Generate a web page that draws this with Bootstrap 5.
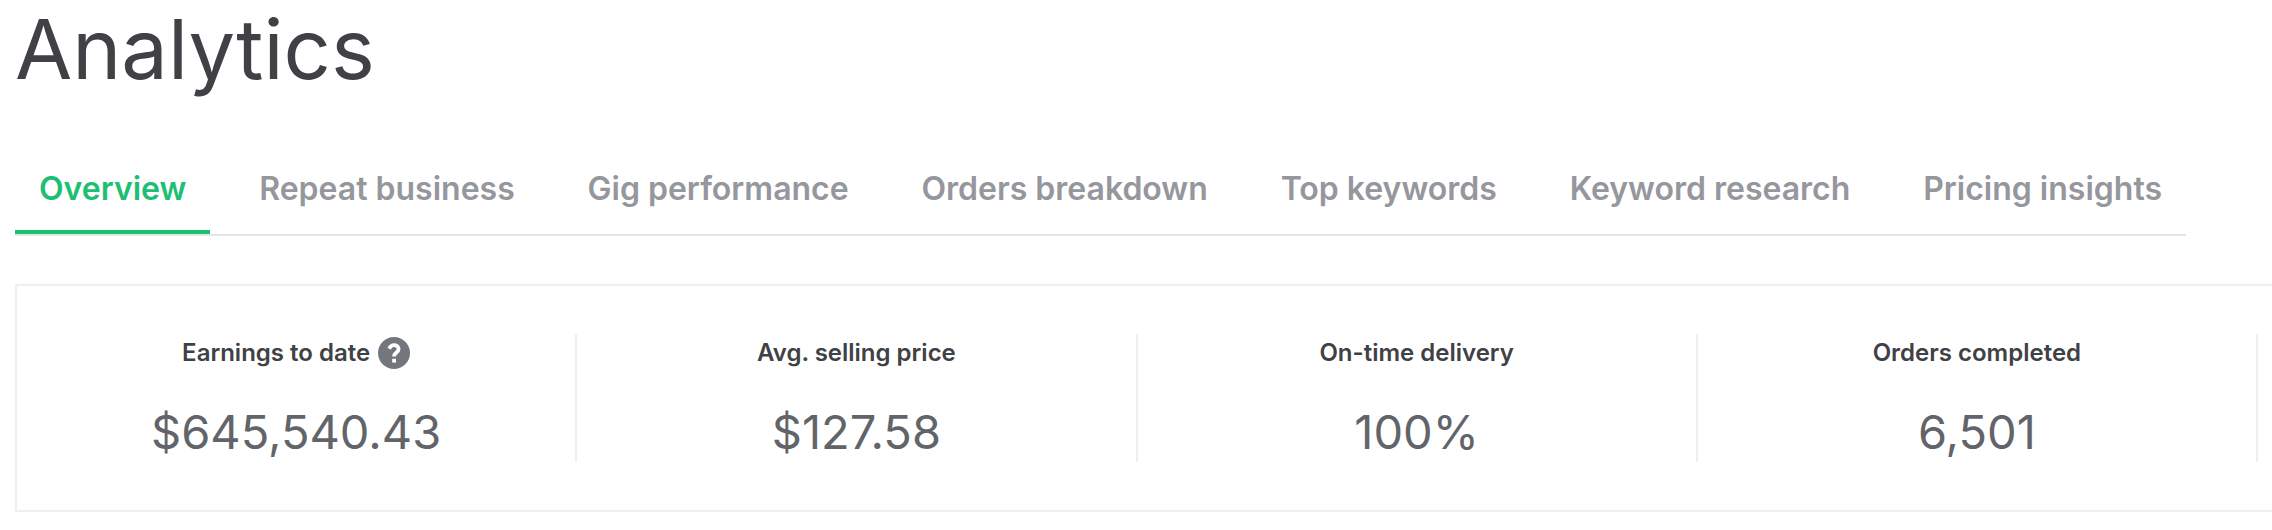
<!DOCTYPE html>
<html lang="en">
<head>
<meta charset="utf-8">
<meta name="viewport" content="width=device-width, initial-scale=1">
<title>Analytics</title>
<link rel="stylesheet" href="https://cdn.jsdelivr.net/npm/bootstrap@5.3.0/dist/css/bootstrap.min.css">
<style>
body { font-family: Inter, "Liberation Sans", sans-serif; color: #404145; overflow-x: hidden; }
.page { padding-left: 15px; }
.page-title { font-size: 83px; line-height: 98px; font-weight: 400; }
.tabs { margin-top: 50px; margin-right: 86px; border-bottom: 2px solid #e4e5e7; }
.tabs .nav-link { padding: 20px 24px 21px; font-size: 32px; line-height: 41px; font-weight: 600; color: #95979d; border-bottom: 4px solid transparent; white-space: nowrap; }
.tabs .nav-link.active { color: #1dbf73; border-color: #1dbf73; }
.stats { margin-top: 48px; padding: 48px 14px 48px 0; border: 2px solid #efeff0; border-right: 0; }
.stat { height: 128px; border-right: 2px solid #efeff0; text-align: center; }
.stat-label { font-size: 24px; line-height: 38px; font-weight: 600; }
.stat-value { margin-top: 28px; font-size: 47px; line-height: 64px; color: #62646a; }
.help { width: 32px; height: 32px; }
</style>
</head>
<body>
<main class="page">
  <h1 class="page-title mb-0">Analytics</h1>
  <nav class="tabs nav flex-nowrap justify-content-between" aria-label="Analytics sections">
    <a class="nav-link active" aria-current="page" href="#">Overview</a>
    <a class="nav-link" href="#">Repeat business</a>
    <a class="nav-link" href="#">Gig performance</a>
    <a class="nav-link" href="#">Orders breakdown</a>
    <a class="nav-link" href="#">Top keywords</a>
    <a class="nav-link" href="#">Keyword research</a>
    <a class="nav-link" href="#">Pricing insights</a>
  </nav>
  <section class="stats" aria-label="Overview">
    <div class="row g-0">
      <div class="col-3 stat">
        <div class="stat-label d-flex justify-content-center align-items-center gap-2">
          <span>Earnings to date</span>
          <button type="button" class="btn p-0 border-0 d-flex" aria-label="About earnings">
            <svg class="help" viewBox="0 0 32 32" aria-hidden="true"><circle cx="16" cy="16" r="16" fill="#74767e"/><path d="M11.2 11.700C12.300 9.400 13.800 8.200 16 8.200c2.700 0 4.600 1.500 4.600 3.900 0 3.500-4.500 3.500-4.500 7.300" fill="none" stroke="#fff" stroke-width="3.800"/><path d="M14.200 21.800h3.800v3.800h-3.800z" fill="#fff"/></svg>
          </button>
        </div>
        <div class="stat-value">$645,540.43</div>
      </div>
      <div class="col-3 stat">
        <div class="stat-label">Avg. selling price</div>
        <div class="stat-value">$127.58</div>
      </div>
      <div class="col-3 stat">
        <div class="stat-label">On-time delivery</div>
        <div class="stat-value">100%</div>
      </div>
      <div class="col-3 stat">
        <div class="stat-label">Orders completed</div>
        <div class="stat-value">6,501</div>
      </div>
    </div>
  </section>
</main>
<script src="https://cdn.jsdelivr.net/npm/bootstrap@5.3.0/dist/js/bootstrap.bundle.min.js"></script>
</body>
</html>
